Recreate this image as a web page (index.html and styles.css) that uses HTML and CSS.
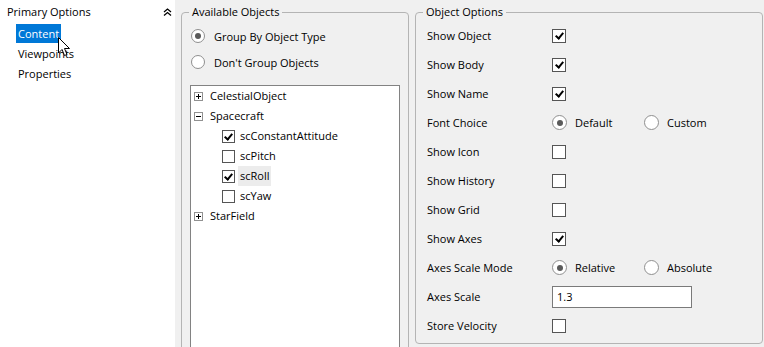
FILE: index.html
```html
<!DOCTYPE html>
<html>
<head>
<meta charset="utf-8">
<link rel="stylesheet" href="styles.css">
</head>
<body>
<div class="app">
  <aside class="sidebar">
    <div class="side-head">
      <span>Primary Options</span>
      <svg class="chev" width="9" height="8" viewBox="0 0 9 8"><path d="M1 4 L4.5 1 L8 4 M1 7.5 L4.5 4.5 L8 7.5" fill="none" stroke="#000" stroke-width="1.3"/></svg>
    </div>
    <div class="side-item selected">Content</div>
    <div class="side-item">Viewpoints</div>
    <div class="side-item">Properties</div>
    <svg class="cursor" width="13" height="20" viewBox="0 0 13 20"><path d="M0.5 0.5 L0.5 16 L4 12.5 L6.5 18.5 L9 17.5 L6.5 11.5 L11.5 11.5 Z" fill="#fff" stroke="#000" stroke-width="1" stroke-linejoin="miter"/></svg>
  </aside>
  <main class="main">
    <fieldset class="group avail">
      <legend>Available Objects</legend>
      <div class="radio-row"><span class="radio on"></span><span class="rlabel">Group By Object Type</span></div>
      <div class="radio-row"><span class="radio"></span><span class="rlabel">Don't Group Objects</span></div>
      <div class="tree">
        <div class="trow"><span class="expander"><svg width="9" height="9" viewBox="0 0 9 9"><path d="M2 4.5 H7 M4.5 2 V7" stroke="#000" stroke-width="1"/></svg></span><span class="tlabel">CelestialObject</span></div>
        <div class="trow"><span class="expander"><svg width="9" height="9" viewBox="0 0 9 9"><path d="M2 4.5 H7" stroke="#000" stroke-width="1"/></svg></span><span class="tlabel">Spacecraft</span></div>
        <div class="trow child"><span class="tcheck checked"></span><span class="tlabel">scConstantAttitude</span></div>
        <div class="trow child"><span class="tcheck"></span><span class="tlabel">scPitch</span></div>
        <div class="trow child"><span class="tcheck checked"></span><span class="tlabel hover">scRoll</span></div>
        <div class="trow child"><span class="tcheck"></span><span class="tlabel">scYaw</span></div>
        <div class="trow"><span class="expander"><svg width="9" height="9" viewBox="0 0 9 9"><path d="M2 4.5 H7 M4.5 2 V7" stroke="#000" stroke-width="1"/></svg></span><span class="tlabel">StarField</span></div>
      </div>
    </fieldset>
    <fieldset class="group opts">
      <legend>Object Options</legend>
      <div class="orow"><span class="olabel">Show Object</span><span class="check checked"></span></div>
      <div class="orow"><span class="olabel">Show Body</span><span class="check checked"></span></div>
      <div class="orow"><span class="olabel">Show Name</span><span class="check checked"></span></div>
      <div class="orow"><span class="olabel">Font Choice</span><span class="ropt"><span class="radio on"></span><span class="rlabel">Default</span></span><span class="ropt"><span class="radio"></span><span class="rlabel">Custom</span></span></div>
      <div class="orow"><span class="olabel">Show Icon</span><span class="check"></span></div>
      <div class="orow"><span class="olabel">Show History</span><span class="check"></span></div>
      <div class="orow"><span class="olabel">Show Grid</span><span class="check"></span></div>
      <div class="orow"><span class="olabel">Show Axes</span><span class="check checked"></span></div>
      <div class="orow"><span class="olabel">Axes Scale Mode</span><span class="ropt"><span class="radio on"></span><span class="rlabel">Relative</span></span><span class="ropt"><span class="radio"></span><span class="rlabel">Absolute</span></span></div>
      <div class="orow"><span class="olabel">Axes Scale</span><span class="textbox">1.3</span></div>
      <div class="orow"><span class="olabel">Store Velocity</span><span class="check"></span></div>
    </fieldset>
  </main>
</div>
</body>
</html>
```
FILE: styles.css
```css
html, body {
  margin: 0;
  padding: 0;
}
body {
  background: #f0f0f0;
  font-family: "Open Sans", "Noto Sans", sans-serif;
  font-size: 11px;
  color: #000;
  overflow: hidden;
}
.app {
  display: flex;
  height: 347px;
  overflow: hidden;
}
.sidebar {
  position: relative;
  width: 175px;
  flex: none;
  background: #fff;
  padding-top: 1px;
  box-sizing: border-box;
}
.side-head {
  display: flex;
  align-items: center;
  justify-content: space-between;
  height: 20px;
  padding: 0 3px 0 7px;
  margin-bottom: 3px;
}
.chev {
  display: block;
  margin-top: 1px;
}
.side-item {
  height: 20px;
  line-height: 19px;
  margin-left: 16px;
  padding: 0 2px;
  width: max-content;
}
.side-item.selected {
  background: #0078d7;
  color: #fff;
  height: 19px;
  margin-bottom: 1px;
}
.cursor {
  position: absolute;
  left: 58px;
  top: 37px;
}
.main {
  flex: 1;
  display: flex;
  gap: 6px;
  padding: 4px 1px 0 6px;
  align-items: flex-start;
}
.group {
  margin: 0;
  border: 1px solid #b4b4b4;
  border-radius: 4px;
  box-sizing: border-box;
}
.group legend {
  padding: 0 3px;
  height: 16px;
  line-height: 16px;
  margin-left: -1px;
}
.avail {
  width: 228px;
  height: 380px;
  padding: 3px 8px 0 8px;
}
.opts {
  flex: 1;
  padding: 1px 8px 3px 8px;
}
.radio-row {
  height: 26px;
  display: flex;
  align-items: center;
}
.radio {
  width: 14px;
  height: 14px;
  border: 1px solid #8f8f8f;
  border-radius: 50%;
  background: #fff;
  box-sizing: border-box;
  flex: none;
  display: flex;
  align-items: center;
  justify-content: center;
}
.radio.on::after {
  content: "";
  width: 6px;
  height: 6px;
  border-radius: 50%;
  background: #5a5a5a;
}
.radio-row .radio {
  margin-left: 1px;
}
.rlabel {
  margin-left: 9px;
}
.tree {
  margin-top: 10px;
  height: 300px;
  background: #fff;
  border: 1px solid #828282;
  padding: 0 2px;
}
.trow {
  height: 20px;
  display: flex;
  align-items: center;
}
.expander {
  width: 9px;
  height: 9px;
  margin-left: 1px;
  border: 1px solid #919191;
  box-sizing: border-box;
  display: flex;
}
.expander svg {
  display: block;
  margin: -1px;
}
.trow .tlabel {
  margin-left: 5px;
  padding: 0 2px;
  line-height: 20px;
}
.trow.child {
  padding-left: 29px;
}
.trow.child .tlabel {
  margin-left: 3px;
}
.tlabel.hover {
  background: #ececec;
}
.tcheck, .check {
  width: 13px;
  height: 13px;
  border: 1px solid #555;
  background: #fff;
  box-sizing: border-box;
  flex: none;
  position: relative;
}
.check {
  width: 14px;
  height: 14px;
}
.tcheck.checked::after, .check.checked::after {
  content: "";
  position: absolute;
  left: 3px;
  top: 1px;
  width: 3px;
  height: 6px;
  border-right: 2px solid #000;
  border-bottom: 2px solid #000;
  transform: rotate(40deg);
}
.check.checked::after {
  left: 4px;
  top: 1.5px;
}
.orow {
  height: 29px;
  display: flex;
  align-items: center;
}
.olabel {
  width: 125px;
  padding-left: 3px;
  flex: none;
}
.ropt {
  display: flex;
  align-items: center;
  width: 92px;
}
.ropt .radio {
  width: 15px;
  height: 15px;
}
.ropt .rlabel {
  margin-left: 8px;
}
.textbox {
  width: 140px;
  height: 22px;
  box-sizing: border-box;
  border: 1px solid #7a7a7a;
  background: #fff;
  line-height: 20px;
  padding-left: 4px;
}
```
